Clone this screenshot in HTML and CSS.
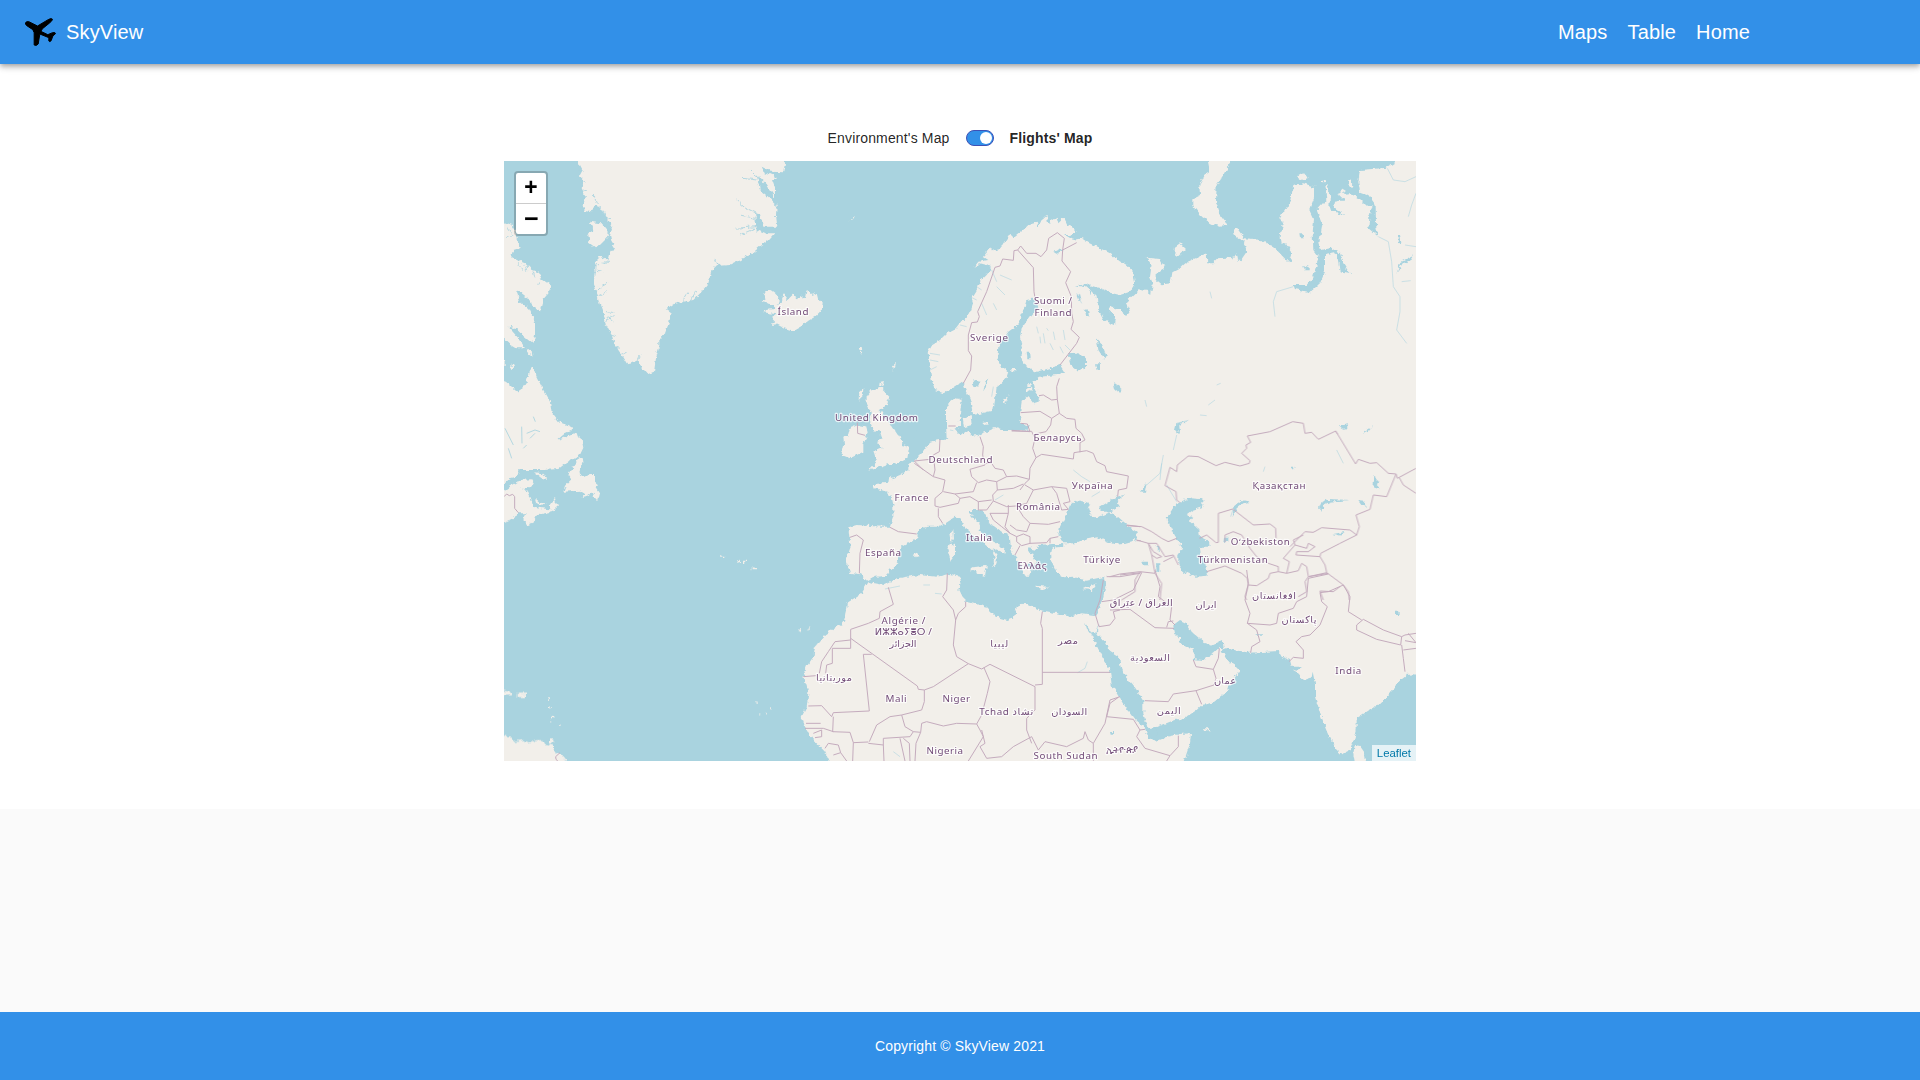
FILE: index.html
```html
<!DOCTYPE html>
<html lang="en">
<head>
<meta charset="utf-8">
<title>SkyView</title>
<link rel="stylesheet" href="styles.css">
</head>
<body>
<header class="topbar">
  <a class="brand"><svg class="plane" viewBox="72 51 98 90"><path d="M76 69Q77 64 86 65L112 78 144 59Q154 53 157 58 156 63 148 69L127 86 122 94 143 104 157 98Q166 96 166 101L158 108 153 122Q148 127 146 123L146 113 119 102 114 132Q109 139 102 135L102 98 98 89 80 77Q75 74 76 69Z"/></svg><span>SkyView</span></a>
  <nav class="nav"><a>Maps</a><a>Table</a><a>Home</a></nav>
</header>
<main class="content">
  <div class="switch-row">
    <span class="switch-label">Environment's Map</span>
    <span class="switch"><span class="knob"></span></span>
    <span class="switch-label active">Flights' Map</span>
  </div>
  <section class="map">
    <svg class="world" viewBox="504 161 912 600">
      <defs><filter id="coast" filterUnits="userSpaceOnUse" x="494" y="151" width="932" height="620" color-interpolation-filters="sRGB"><feTurbulence type="fractalNoise" baseFrequency=".22" numOctaves="2" seed="4"/><feDisplacementMap in="SourceGraphic" scale="5.5" xChannelSelector="R" yChannelSelector="G"/></filter></defs>
      <g filter="url(#coast)">
      <!-- Greenland, Baffin Island, Iceland -->
      <g class="land" transform="translate(500 155) scale(.33333)">
        <path d="M230 0L235 20 248 45 240 60 250 80 245 100 255 120 248 150 255 168 275 172 285 152 300 158 322 190 337 215 330 240 335 262 350 285 332 288 325 315 300 302 288 320 285 350 280 385 290 415 300 450 312 480 318 510 335 540 345 570 365 600 380 625 410 618 430 640 445 657 462 650 468 610 478 575 478 555 495 535 508 500 512 470 500 462 520 448 550 440 580 435 605 410 625 385 635 345 653 330 642 310 660 332 690 330 720 315 750 300 780 275 805 255 823 235 795 235 770 225 765 175 780 178 790 215 832 215 828 180 830 150 810 130 780 105 770 60 800 90 825 128 825 100 815 72 835 72 820 62 790 50 785 35 815 50 850 52 855 25 850 0ZM270 200L300 205 315 215 328 240 315 255 300 270 285 277 265 262 262 240 280 225ZM0 200L35 212 50 235 50 255 62 278 40 285 35 302 50 315 75 325 95 345 115 352 125 372 155 393 145 412 130 430 120 467 100 455 85 430 65 415 48 405 60 440 85 460 105 500 105 540 100 565 70 540 50 520 25 515 60 555 75 580 50 580 30 568 0 540ZM80 578L95 590 97 602 85 595ZM30 635L40 628 42 640 34 645ZM0 612L14 618 14 630 0 630ZM785 440L800 430 790 415 812 405 825 415 838 430 832 448 845 442 850 418 862 435 880 418 890 435 900 420 915 430 920 403 935 420 950 415 955 435 968 445 965 465 945 485 925 497 910 510 880 527 850 518 830 508 812 510 825 500 815 490 830 478 790 472 795 465 825 462 815 448Z"/>
      </g>
      <!-- Eastern Canada -->
      <g class="land" transform="translate(500 350) scale(.33333)">
        <path d="M97 45L110 80 130 120 150 155 155 190 175 215 200 225 222 238 195 250 172 270 195 262 222 250 245 265 250 290 235 322 210 330 175 357 130 360 60 360 50 380 30 385 0 415 0 85 30 105 50 125 70 110 80 95 88 70ZM0 430L35 405 60 390 95 388 102 400 90 415 65 413 85 425 95 450 100 470 125 475 150 478 150 465 165 443 168 460 178 465 155 485 125 492 105 500 95 520 80 527 70 510 80 490 55 490 50 500 0 522ZM105 447L118 458 137 460 125 467 108 458ZM102 367L125 370 145 387 125 385ZM240 322L252 325 240 355 235 370 250 380 270 375 285 375 285 395 297 405 290 415 300 430 295 450 278 440 282 425 262 440 240 445 255 432 240 422 190 425 195 410 215 390 205 375 220 350ZM664 617h6v4h-6ZM708 634l14 -2 2 6 -12 3ZM732 632h6v5h-6ZM758 652l13 2v4h-13Z"/>
      </g>
      <!-- Scandinavia and Arctic coast of Russia -->
      <g class="land" transform="translate(1110 155) scale(.33333)">
        <path d="M-500 715L-525 705 -535 675 -540 645 -545 615 -547 590 -535 570 -510 555 -490 535 -460 520 -445 500 -420 475 -410 445 -415 430 -400 405 -390 380 -370 360 -355 340 -370 330 -390 325 -410 340 -395 320 -365 315 -380 305 -360 280 -340 290 -320 265 -300 235 -290 250 -260 225 -240 205 -220 200 -215 215 -205 195 -190 183 -185 210 -175 195 -160 185 -155 205 -140 190 -130 210 -115 215 -100 230 -120 240 -135 240 -110 255 -85 250 -65 263 -30 280 0 295 25 315 50 330 70 350 75 385 60 410 30 420 0 413 -30 400 -65 390 -85 385 -60 405 -40 425 -35 465 -20 495 15 510 18 485 -5 465 0 455 30 465 50 482 60 468 48 445 60 430 90 402 110 405 123 425 128 385 120 365 125 330 110 308 150 312 165 340 140 355 140 375 155 388 182 385 187 352 210 340 230 322 260 308 290 295 292 325 310 325 325 310 345 308 370 310 380 295 385 320 395 312 410 290 402 265 405 250 440 253 470 265 500 285 538 325 548 295 530 270 515 265 512 245 518 205 510 190 525 165 540 140 550 90 580 85 612 95 652 90 660 110 658 165 705 180 670 155 672 140 700 135 682 118 720 115 745 130 770 155 788 150 797 150 775 120 750 110 745 80 750 45 830 38 855 22 860 0 940 0 940 1000 -400 1000ZM290 0H358L355 30 340 60 320 90 318 140 330 180 352 210 330 212 300 205 270 180 250 155 250 130 270 120 268 90 285 60 300 50ZM370 220L385 225 403 250 398 257 370 238ZM195 275L210 265 228 282 205 303 193 295ZM565 60L580 52 593 68 567 78ZM685 115L700 103 708 108 690 120ZM715 75L725 78 727 95 712 92ZM635 75h9l3 10h-10Z"/>
      </g>
      <!-- Europe, Asia and Africa -->
      <g class="land" transform="translate(820 380) scale(.33333)">
        <path d="M385 175L380 140 378 100 385 75 420 55 420 90 405 120 405 145 415 165 430 170 450 150 470 170 500 155 530 142 560 150 620 150 600 80 700 0 900 0 1800 0 1800 882 1785 880 1760 882 1755 890 1730 910 1725 920 1710 940 1680 970 1640 995 1610 1015 1610 1050 1600 1085 1590 1110 1565 1123 1545 1105 1520 1050 1500 1000 1485 950 1485 910 1478 875 1475 892 1450 900 1420 867 1435 870 1450 860 1415 860 1410 840 1385 830 1375 813 1290 818 1240 810 1220 805 1205 810 1220 840 1245 855 1260 870 1230 915 1225 930 1200 950 1180 968 1145 975 1130 990 1100 1010 1050 1025 1010 1042 982 1045 980 1050 985 1075 1010 1082 1040 1070 1080 1062 1113 1060 1110 1090 1090 1150 30 1150 15 1115 -10 1090 -30 1065 -45 1040 -55 1010 -40 980 -35 940 -40 915 -50 890 -40 860 -20 830 -15 800 10 770 40 745 70 730 75 710 80 670 125 640 145 607 190 615 230 595 300 585 350 590 390 582 420 590 425 610 415 630 425 650 440 665 500 680 530 710 565 720 580 715 590 680 615 668 660 690 710 700 750 710 785 700 825 705 835 690 850 650 858 610 855 590 800 602 760 590 730 592 710 580 692 540 690 515 705 503 730 495 700 492 655 495 650 510 625 505 640 530 650 550 620 555 635 570 630 590 615 590 600 550 580 525 572 500 570 470 545 455 510 430 490 395 475 390 450 390 455 410 475 430 480 455 510 480 553 505 550 518 515 505 530 525 530 550 515 562 525 535 518 512 490 490 465 470 450 455 430 440 425 420 405 410 390 420 375 430 355 440 325 440 300 445 290 475 245 500 230 530 235 550 210 570 200 588 165 590 145 603 130 590 115 582 90 578 78 540 92 500 88 470 85 442 110 435 150 438 190 440 210 440 220 410 220 375 215 350 200 335 165 325 160 312 208 308 212 283 215 295 240 285 265 270 265 255 285 240 310 215 330 185ZM155 30L180 22 208 50 200 75 180 90 205 130 220 140 240 170 245 195 268 200 262 235 230 250 195 255 145 272 170 245 165 230 160 215 185 205 175 190 185 170 180 155 160 150 150 130 155 100 140 70 140 50ZM90 145L115 135 140 140 143 160 130 190 130 215 90 235 65 225 72 195 70 170 85 165ZM118 35L130 25 128 48 116 60ZM390 490L405 495 405 525 392 542 382 510ZM388 460L400 448 402 478 392 485ZM455 562L500 558 495 587 455 572ZM643 617L690 620 665 627ZM790 628L830 610 815 630ZM278 525L290 518 300 527 285 532ZM115 -102h10l2 10h-8ZM120 -85h6v8h-6ZM85 -478L105 -492 100 -484 90 -480ZM215 -40L228 -52 222 -28ZM182 5L192 3 188 15 180 18ZM1605 1095L1620 1098 1635 1120 1638 1150 1605 1150 1600 1120ZM1150 1045h20v6h-20Z"/>
      </g>
      <!-- Baltic, Black and Caspian seas, gulfs -->
      <g class="sea" transform="translate(780 200) scale(.33333)">
        <path d="M490 580L510 570 548 545 555 565 570 600 580 645 605 640 640 632 645 600 650 560 680 530 685 515 660 495 652 475 655 440 685 395 720 370 725 345 740 300 762 295 775 320 750 350 725 385 720 410 725 440 725 480 740 500 770 515 840 495 855 518 835 525 780 530 760 545 765 570 778 590 775 605 760 610 745 590 725 605 720 640 722 672 748 680 745 692 700 690 670 690 650 682 620 695 580 710 560 692 545 705 530 700 528 675 545 655 540 640 545 600 525 595 500 612 495 720 400 720 440 590Z"/>
        <path d="M865 460L890 458 918 475 918 500 895 512 875 498ZM950 415L965 430 980 470 975 480 955 450ZM575 555L588 540 602 542 595 560ZM610 575L628 535 615 545ZM1000 545L1025 565 1020 578 1005 568ZM820 155L845 145 850 155 830 162ZM885 260L925 250 905 262ZM740 455h10l2 20h-10ZM945 490h15v20h-10ZM890 285l10 -4 4 16 -8 4ZM915 330l8 -2 4 20 -8 4ZM925 270l8 4 -4 12Z"/>
      </g>
      <g class="land" transform="translate(780 200) scale(.33333)"><path d="M498 680L498 625 510 608 538 595 540 630 525 655 525 680 540 705 500 712ZM548 655L572 645 575 675 552 682ZM528 665L540 665 540 678 530 678ZM670 598L686 583 675 612ZM694 504h14v10h-14ZM735 568L755 560 758 570 738 577ZM742 550h10v8h-10ZM735 572l20 -3 -5 6ZM610 669l9 -2 5 6 -8 2Z"/></g>
      <g class="sea" transform="translate(1110 155) scale(.33333)">
        <path d="M612 95L645 85 652 130 620 165 637 210 628 260 632 285 665 278 690 295 700 325 720 357 692 352 688 320 675 292 645 298 645 350 630 385 600 412 555 402 550 390 590 390 610 365 620 330 625 305 610 285 608 235 612 195 598 165 612 130ZM788 150L797 150 798 210 805 245 775 220 778 185ZM568 235h14v12h-12ZM580 330l16 5v8h-12ZM690 130h14v10h-14ZM862 240h8l4 20 -10 5ZM860 355L872 320 912 300 900 318 878 325Z"/>
      </g>
      <g class="sea" transform="translate(820 380) scale(.33333)">
        <path d="M742 395L750 375 765 362 800 370 812 375 805 392 820 412 835 410 870 395 890 410 925 440 950 455 950 480 920 488 880 492 835 472 790 480 770 490 730 490 715 465 720 440 730 420ZM835 385L865 365 890 350 912 345 890 365 900 380 870 395 850 395ZM700 494L728 492 736 500 710 502Z"/>
      </g>
      <g class="sea" transform="translate(1110 400) scale(.33333)">
        <path d="M170 350L200 310 245 292 280 295 280 320 250 330 230 345 250 353 240 365 268 390 270 410 300 425 302 440 270 440 272 465 290 490 290 527 255 530 220 515 205 495 205 465 220 445 195 410 180 380ZM627 325L635 305 655 297 720 300 660 305 640 315 638 335ZM670 402L705 395 690 407ZM745 300L765 302 770 320 758 317ZM370 320L395 300 420 305 400 310 380 325 368 352ZM345 410h10v15h-12ZM543 200h10v8h-10ZM793 225L805 245 800 255 815 270 790 262ZM195 90L200 70 235 62 208 75 210 105ZM90 275L110 250 105 275ZM755 102L790 78 775 95ZM138 490h10v25h-8ZM95 485h16v8h-12ZM135 440h14v14ZM688 80L715 72 700 90Z"/>
      </g>
      <g class="sea" transform="translate(1090 570) scale(.33333)">
        <path d="M5 190L20 188 45 215 60 245 90 265 100 310 130 345 160 390 160 430 172 475 200 472 200 512 175 505 165 475 135 450 105 410 80 370 65 345 60 300 35 260 10 210ZM-15 158L2 185 8 200 -8 180ZM26 162L24 190 18 190ZM250 165L270 150 290 160 305 185 340 215 370 225 398 212 402 242 390 230 370 250 340 270 312 268 310 240 300 232 285 235 255 190ZM60 483h12v8h-10ZM500 190h20v4h-20ZM915 125h14v7h-14Z"/>
      </g>
      <!-- Caribbean islands and South America, Canaries, Cape Verde -->
      <g class="land" transform="translate(500 660) scale(.33333)">
        <path d="M0 90L30 95 34 103 0 105ZM53 101h25v10h-25ZM0 225L30 230 40 243 70 240 85 250 110 240 130 240 135 252 158 255 162 272 180 280 200 303 200 330 0 330ZM150 238h10v10h-10ZM143 115h4v5h-4ZM147 138h5v7h-5ZM155 168h5v7h-5ZM150 185h4v5h-4ZM180 194h5v4h-5ZM767 125h6v5h-6ZM808 142h5v5h-5ZM778 163h6v4h-6ZM795 159h6v4h-6ZM895 -88l8 -6v10ZM920 -87l12 -14 -4 10Z"/>
      </g>
      <!-- Fjords -->
      <g class="river" transform="translate(500 155) scale(.33333)"><path d="M730 70L770 75 785 60M750 45L770 65M710 135L740 160 770 175M720 180L765 190M705 220L770 215M720 240L765 220M550 440L560 410M570 440L590 405M285 345L312 350M290 330L320 325M288 405L330 380M290 425L320 410M300 320L330 322M315 500L345 480M320 485L340 500M318 470L340 472M280 120L300 165M300 150L320 190M310 200L330 190M235 40L255 50M240 75L260 85M245 110L262 105M340 570L360 580M360 600L380 590M410 620L420 600M330 540L350 545M55 325L70 345M75 330L80 350M100 350L105 370M120 375L110 390M20 215L35 235M15 250L40 240"/></g>
      </g>
      <!-- Rivers and lakes -->
      <g class="river" transform="translate(500 155) scale(.33333)"><path d="M80 835L105 825 120 830M90 850L105 835M65 815L66 865M25 880L35 910M15 820L40 870M100 785L106 800M70 880L80 870"/></g>
      <g class="river faint" transform="translate(1110 155) scale(.33333)"><path d="M805 245L835 260 845 320 850 395 870 425 870 470 860 525 890 565M832 40L850 75 885 80 918 65M918 115L905 150 895 185M550 395L500 410 490 440 495 485M295 750L315 735M270 780L290 782M200 835L200 805 235 796M885 270L918 275M875 380L902 377M300 410L305 430M320 690L332 685"/></g>
      <g class="river faint" transform="translate(1110 400) scale(.33333)"><path d="M200 105L190 150M160 165L150 220 110 255M170 255L200 305M370 325L362 350M680 150L700 190M460 215L465 200M105 0L110 20M150 240L155 190"/></g>
      <g class="river faint" transform="translate(780 200) scale(.33333)"><path d="M635 210L650 245M650 260L675 285M660 225L695 240M640 310L650 330M605 310L620 345M770 380L775 400M780 410L782 430M790 400L795 430M820 395L825 420M850 390L855 420M810 430L820 450M840 440L850 460M855 435L870 450M800 385L805 392M450 480L475 485M450 510L470 500M450 460L480 465M890 280L905 310M640 560L635 590M1000 370L985 350M570 290L590 300M590 260L605 270M540 375L560 380"/></g>
      <g class="river faint" transform="translate(820 380) scale(.33333)"><path d="M760 270L785 290 810 305M525 360L550 345M390 150L400 152M780 600L790 598M815 350L840 335"/></g>
      <g class="river faint" transform="translate(780 570) scale(.33333)"><path d="M893 308L915 295 922 275M340 545L360 560M315 57L360 48M430 45L450 45M465 70L485 72"/></g>
      <!-- Borders -->
      <g class="border" transform="translate(500 350) scale(.33333)"><path d="M12 440L20 432 28 437 38 433 44 440 44 475 55 488"/></g>
      <g class="border" transform="translate(500 660) scale(.33333)"><path d="M180 278L167 290 168 298 175 305"/></g>
      <g class="border" transform="translate(780 200) scale(.33333)"><path d="M550 550L572 510 575 468 565 452 565 405 575 368 592 366 598 350 593 335 620 275 645 202 660 198 668 177 700 181 702 152 713 150 760 203 762 275 766 300M713 150L722 138 740 160 768 160 783 170 800 150 806 115 832 98 853 115 848 150 890 128M848 150L846 183 872 215 857 248 874 290 875 340 880 365 873 388 898 412 890 430 840 495M838 535L830 560 832 598 838 640 815 655 780 634 722 638M832 598L815 600 790 585 777 587M815 655L812 675 798 695 765 702M722 670L742 672 750 695 695 691M838 640L860 655 885 658 888 685 905 700 915 720 900 728 900 757M232 668L233 700 255 706M505 678h22"/></g>
      <g class="border" transform="translate(820 380) scale(.33333)"><path d="M575 153L635 154 645 175 638 205 648 233 630 265 628 298 615 310 600 330M648 233L665 223 760 237 762 218 800 212 820 220 830 245 855 257 860 275 925 288 920 325 895 330 893 350M480 170L490 200 488 225 495 255M495 255L450 268 455 290 475 308 500 300 530 305 560 290 550 270 525 265 515 250 495 250M560 290L590 288 628 298M530 305L532 330 580 325 610 312M532 330L518 345 520 363 560 380 588 378 620 370 640 330 695 320 740 325 750 365 730 370 745 388 725 390M640 330L615 315M695 320L710 340 725 390M360 178L358 215 340 225 330 238 283 243M283 250L340 290 375 300 368 335 345 355 345 378 360 382 415 370 420 355 405 342 370 335M340 225L345 270 340 290M283 243L310 270M405 342L460 335 470 308M420 355L450 350 475 365 515 360M355 385L355 410 368 430M475 365L475 390 500 390 520 363M510 400L565 400 555 440 570 460 545 440 520 420 510 400M565 400L565 375M590 378L610 410 630 430 620 455 590 450 570 435M630 430L685 433 720 425M590 470L610 462 630 470 630 490 605 497 590 485ZM630 490L680 488 690 475 715 470M570 460L590 470M600 497L585 525M690 475L690 490M210 442L235 455 290 462M90 472L110 465 130 480 120 520 118 580M860 590L900 590 960 580M950 482h12M920 435L960 440"/></g>
      <g class="border" transform="translate(1110 400) scale(.33333)"><path d="M210 308L200 300 198 275 165 257 180 202 200 215 202 195 235 168 265 170 318 197 345 187 390 198 418 190 420 182 395 160 410 145 408 135 422 127 412 108 480 95 548 65 580 70 585 100 605 97 625 118 677 93 737 192 745 178 780 190 800 188 835 220 858 222 830 290 790 285 780 328 738 345 748 380 740 405 720 390 635 383 610 397 585 395 540 440M858 222L862 235 918 205M868 233L880 255 918 280M677 93L683 103M325 427V340L368 327 430 375 480 372 497 385 498 415M325 427L318 428 290 405 268 415M345 427V405L370 395 395 405 420 445 440 470 475 490 505 500 505 515 530 520 538 485 520 475 555 435 550 420 580 405M555 435L590 445 595 430 615 440 595 455 560 455 558 465 630 470 632 460 690 430 740 405M630 470L645 495 650 518 595 530 590 500 575 490 565 512 530 520M290 515L345 498 395 520 412 535 415 555 440 557 475 535 480 520 505 515M415 555L405 590 410 600M595 530L585 545 590 575 565 590M650 518L700 555 715 575 718 600M595 530L655 520M690 560L670 575 630 573 640 600M50 377L95 380 125 395 155 415 175 425 200 415M80 420L115 430 130 455 155 470 140 475 125 465 115 430 140 430 165 470 190 465 205 495M160 485L190 470M0 530L30 522 90 515 135 520 125 465M135 520L155 550 150 600M90 515L75 540 75 575 35 600"/></g>
      <g class="border" transform="translate(780 570) scale(.33333)"><path d="M325 52L340 103 300 125 298 145 265 160 212 178V235H157V280L140 285 137 310M70 320L108 317M212 210L165 215 145 245 125 275 118 310M212 205L412 348 415 358 433 360 460 350 565 281 530 260 520 225 527 150 520 120 488 80 500 60 502 10M527 150L535 130 557 110 557 95M565 281L605 297 630 283 765 350V420L740 445 740 480 755 520M787 125L782 160 787 175V343L765 345M787 307H990M275 253H250L268 423 160 428 155 440 125 407 85 408M433 360V395L425 420 365 435 375 470 400 485 390 500 310 505 310 525 265 520M365 435L330 440 290 465 268 515M160 440L158 485 210 487 220 518 218 573M220 518L265 516M78 460H122M75 475H130L160 485M100 490L125 480 125 500 105 503M135 535L145 520 175 525 182 548 160 555M182 548L200 573M310 525L312 573M360 505L375 573M370 505L388 520 390 573M400 485L422 487 408 520 405 573M422 487L425 460 440 455 490 468 530 460 590 462 600 480 610 500 565 573M590 462L605 435 622 370 630 335 612 293M605 480L615 520 600 530 620 565 665 560 700 530 755 500 775 540 795 515 860 530 910 505 915 485 925 510 940 520 940 573M940 520L975 460 990 390 1020 380M970 30L960 90 945 130 957 170 990 165 1005 145 1000 125 1020 120"/></g>
      <g class="border" transform="translate(1090 570) scale(.33333)"><path d="M90 15L155 8 130 60 90 80 70 90 35 95M195 0L210 50 205 80 245 110 240 150 255 165M60 120L120 118 195 173 252 175M230 172L235 155 250 153M310 270L318 290 370 298 385 265 388 235M370 298L378 325 372 345 318 362 335 403M318 362L250 372 235 395 165 392M470 0L475 40 465 90 480 130 472 160 500 180 510 215 485 230 482 248M472 160L540 165 560 160 565 130 610 115 620 95 650 80 655 25 715 12M760 45L715 65 690 68 695 95 712 110 690 165 660 195 635 200 618 215 640 240 640 265 610 262 597 275M760 45L780 80 775 125 815 150M800 165L820 148 880 180 935 200 932 225 860 208 800 180ZM935 200L945 195 978 190M945 212L978 218 955 190M940 240L978 235M935 225L940 265 945 305M50 440L60 400 85 382M50 440L130 448 150 480 165 478M150 480L140 500 165 535 240 557 265 530 265 497M240 557L230 573"/></g>
      <!-- Country names -->
      <g class="names">
        <text x="793" y="314.6" textLength="31">Ísland</text><text x="989" y="341.3" textLength="38">Sverige</text><text x="1053" y="304" textLength="38">Suomi /</text><text x="1053" y="315.7" textLength="37">Finland</text><text x="876.5" y="421" textLength="83">United Kingdom</text><text x="1057.5" y="440.7" textLength="48">Беларусь</text><text x="960.5" y="463.3" textLength="64">Deutschland</text><text x="1092.3" y="489" textLength="41">Україна</text><text x="911.5" y="501" textLength="34">France</text><text x="1038" y="509.7" textLength="44">România</text><text x="979" y="541" textLength="26">Italia</text><text x="883" y="556" textLength="36">España</text><text x="1032" y="568.7" textLength="29">Ελλάς</text><text x="1101.7" y="562.7" textLength="37">Türkiye</text><text x="1279" y="489" textLength="53">Қазақстан</text><text x="1260.3" y="544.7" textLength="59">Oʻzbekiston</text><text x="1232.7" y="563" textLength="70">Türkmenistan</text><text x="1348.3" y="673.7" textLength="26">India</text><text x="903.5" y="623.5" textLength="44">Algérie /</text><text x="903.3" y="635.3" textLength="57">ⵍⵣⵣⴰⵢⴻⵔ /</text><text x="896" y="702" textLength="21">Mali</text><text x="956.3" y="702" textLength="27.5">Niger</text><text x="944.8" y="753.5" textLength="36.5">Nigeria</text><text x="1065.5" y="759.2" textLength="64">South Sudan</text><text x="1122" y="752.5" textLength="32">ኢትዮጵያ</text>
        <text x="1006.3" y="715" textLength="54">Tchad تشاد</text><text x="1274" y="598.5" textLength="44">افغانستان</text><text x="1141.3" y="606" textLength="63">العراق / عێراق</text><text x="1206" y="608" textLength="21">ایران</text><text x="1299" y="622.5" textLength="35">پاکستان</text><text x="1150" y="661" textLength="40">السعودية</text><text x="1225" y="684" textLength="22">عمان</text><text x="1168.7" y="714" textLength="24">اليمن</text><text x="903" y="647" textLength="27">الجزائر</text><text x="999.3" y="647" textLength="18">ليبيا</text><text x="1068" y="644" textLength="20">مصر</text><text x="834" y="681" textLength="36">موريتانيا</text><text x="1069.3" y="714.5" textLength="36">السودان</text>
      </g>
    </svg>
    <div class="zoom"><a>+</a><a>−</a></div>
    <div class="attribution"><a>Leaflet</a></div>
  </section>
</main>
<footer class="footer">Copyright © SkyView 2021</footer>
</body>
</html>
```
FILE: styles.css
```css
* { box-sizing: border-box; }
body { margin: 0; height: 1080px; display: flex; flex-direction: column; background: #fafafa; font-family: "Liberation Sans", Arial, sans-serif; overflow: hidden; }
.topbar { position: relative; flex: none; height: 64px; padding: 0 170px 0 24px; display: flex; align-items: center; justify-content: space-between; background: #3290e8; color: #fff; font-size: 20px; letter-spacing: .15px; box-shadow: 0 2px 4px -1px rgba(0,0,0,.2), 0 4px 5px rgba(0,0,0,.14), 0 1px 10px rgba(0,0,0,.12); }
.brand { display: flex; align-items: center; gap: 9px; }
.plane { width: 33px; height: 30px; stroke: #000; stroke-width: 3; stroke-linejoin: round; }
.nav { display: flex; gap: 20px; }
.content { flex: none; height: 745px; padding-top: 64px; background: #fff; display: flex; flex-direction: column; align-items: center; }
.switch-row { height: 20px; margin-bottom: 13px; display: flex; align-items: center; color: rgba(0,0,0,.87); font-size: 14px; line-height: 20px; letter-spacing: .15px; }
.active { font-weight: 700; }
.switch { width: 28px; height: 16px; margin: 0 16px; padding: 1px; border: 1px solid #3f51b5; border-radius: 8px; background: #3290e8; display: flex; justify-content: flex-end; }
.knob { width: 12px; height: 12px; border-radius: 50%; background: #fff; }
.map { position: relative; width: 912px; height: 600px; background: #a9d3df; overflow: hidden; }
.world { display: block; width: 912px; height: 600px; }
.land { fill: #f2efea; }
.sea { fill: #a9d3df; }
.river { fill: none; stroke: #a9d3df; stroke-width: 3; opacity: .85; }
.faint { opacity: .55; }
.border { fill: none; stroke: #c4abbd; stroke-width: 3; stroke-linejoin: round; }
.names text { font: 400 9.8px "Noto Sans", "DejaVu Sans", sans-serif; text-anchor: middle; fill: #734d79; stroke: rgba(255,255,255,.75); stroke-width: 2.4px; stroke-linejoin: round; paint-order: stroke; }
.zoom { position: absolute; left: 10px; top: 10px; width: 34px; border: 2px solid rgba(0,0,0,.2); border-radius: 4px; background: #fff; background-clip: padding-box; }
.zoom a { display: block; height: 30px; text-align: center; font: bold 23px/33px "Liberation Mono", monospace; color: #000; }
.zoom a:first-child { height: 31px; border-bottom: 1px solid #ccc; }
.zoom a:last-child { font-size: 25px; text-indent: 1px; }
.attribution { position: absolute; right: 0; bottom: 0; height: 16px; padding: 0 5px; background: rgba(255,255,255,.7); font-size: 11.4px; line-height: 16px; color: #0078a8; }
.footer { flex: none; height: 68px; margin-top: auto; background: #3290e8; color: #fff; font-size: 14px; line-height: 68px; letter-spacing: .15px; text-align: center; }
```
